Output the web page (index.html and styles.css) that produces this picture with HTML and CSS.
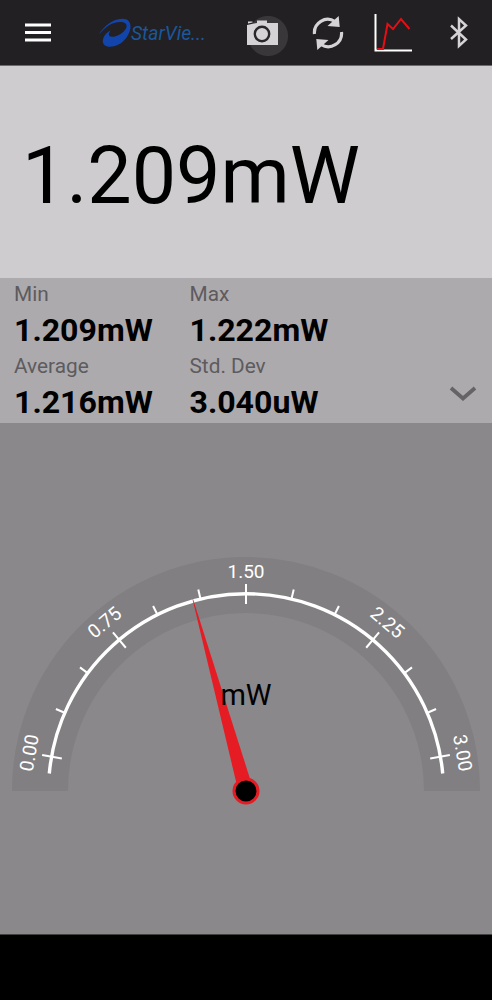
FILE: index.html
```html
<!DOCTYPE html>
<html lang="en">
  <head>
    <meta charset="UTF-8" />
    <meta name="viewport" content="width=device-width, initial-scale=1.0" />
    <title>StarViewer</title>
    <link rel="stylesheet" href="styles.css">
  </head>
  <body>
    <div class="app">
      <header class="toolbar">
        <svg class="menu" width="26" height="20" viewBox="0 0 26 20">
          <path d="M0 2H26M0 9.500H26M0 17H26" />
        </svg>
        <div class="brand">
          <svg class="logo" width="34" height="30" viewBox="0 0 34 30">
            <path fill-rule="evenodd" d="M.8 16.500C6 8 15 1 24 .8C30 .7 33 4 32.500 10C31 19 23 28.700 12 28.800C7 28.700 4.500 26 4.800 22.500C5.300 18.500 8 15 12.500 12.300C10.300 16 10 18.500 14 18.800C19 19 25.500 15 28 10.500C29.500 7 28 4.300 23.500 4C14 3.500 7.500 9 .8 16.500Z" />
          </svg>
          <span class="brandName">StarVie...</span>
        </div>
        <div class="camera">
          <svg width="32" height="26" viewBox="0 0 32 26">
            <path d="M0 5L7 3.500L10 3V.5H20V3H31V25H0ZM1 1.500H5.500V2.500L1 3.500Z" />
            <circle cx="15" cy="14" r="7.200" />
          </svg>
        </div>
        <svg class="refresh" width="32" height="34" viewBox="0 0 32 34">
          <path class="arc" d="M2.500 18A13.300 13.300 0 0 1 23 5.500M29.500 16A13.300 13.300 0 0 1 9 28.500" />
          <path class="head" d="M26.700 0L27.700 11L15.500 10ZM5.300 34L4.300 23L16.500 24Z" />
        </svg>
        <svg class="chart" width="38" height="38" viewBox="0 0 38 38">
          <path class="axis" d="M1.500 0V36.500H38" />
          <path class="trend" d="M3 35H9L13.500 10L19 15L27 5L35.500 15" />
        </svg>
        <svg class="bluetooth" width="18" height="34" viewBox="0 0 18 34">
          <path d="M1 9.500L16 23.500L9 30V3L16 9.500L1 23" />
        </svg>
      </header>

      <div class="reading">1.209mW</div>

      <div class="stats">
        <div class="stat">
          <div class="statName">Min</div>
          <div class="statValue">1.209mW</div>
        </div>
        <div class="stat">
          <div class="statName">Max</div>
          <div class="statValue">1.222mW</div>
        </div>
        <div class="stat">
          <div class="statName">Average</div>
          <div class="statValue">1.216mW</div>
        </div>
        <div class="stat">
          <div class="statName">Std. Dev</div>
          <div class="statValue">3.040uW</div>
        </div>
        <svg class="expand" width="28" height="16" viewBox="0 0 28 16">
          <path d="M2 2L14 12.500L26 2" />
        </svg>
      </div>

      <div class="gaugeNode">
        <!-- origin is the needle pivot -->
        <svg class="gauge" width="492" height="511" viewBox="-246 -368 492 511">
          <path class="band" d="M-206 0A206 206 0 0 1 206 0" />
          <path class="scale" d="M-196.700 -17.500A197.500 197.500 0 0 1 196.700 -17.500" />
          <g class="minor">
            <path d="M0 -197V-207" transform="rotate(-66.670)" />
            <path d="M0 -197V-207" transform="rotate(-53.330)" />
            <path d="M0 -197V-207" transform="rotate(-26.670)" />
            <path d="M0 -197V-207" transform="rotate(-13.330)" />
            <path d="M0 -197V-207" transform="rotate(13.330)" />
            <path d="M0 -197V-207" transform="rotate(26.670)" />
            <path d="M0 -197V-207" transform="rotate(53.330)" />
            <path d="M0 -197V-207" transform="rotate(66.670)" />
          </g>
          <g class="major">
            <g transform="rotate(-80)"><path d="M0 -187V-207" /><text y="-213.500">0.00</text></g>
            <g transform="rotate(-40)"><path d="M0 -187V-207" /><text y="-213.500">0.75</text></g>
            <g><path d="M0 -187V-207" /><text y="-213.500">1.50</text></g>
            <g transform="rotate(40)"><path d="M0 -187V-207" /><text y="-213.500">2.25</text></g>
            <g transform="rotate(80)"><path d="M0 -187V-207" /><text y="-213.500">3.00</text></g>
          </g>
          <path class="needle" d="M-.3 -199H.3L7.500 0H-7.500Z" transform="rotate(-15.500)" />
          <circle class="hub" r="12" />
          <text class="unit" y="-86">mW</text>
        </svg>
      </div>

      <div class="navBar"></div>
    </div>
  </body>
</html>
```
FILE: styles.css
```css
body {
  margin: 0;
  font-family: Roboto, "Liberation Sans", sans-serif;
}

.app {
  width: 492px;
  height: 1000px;
  display: flex;
  flex-direction: column;
  overflow: hidden;
  background: #8a888a;
}

.toolbar {
  display: flex;
  align-items: center;
  box-sizing: border-box;
  height: 66px;
  padding: 0 24px 0 25px;
  background: #222023;
  border-bottom: 1px solid #6b696b;
}
.menu {
  stroke: #fff;
  stroke-width: 2.9;
}
.brand {
  display: flex;
  align-items: center;
  width: 107px;
  margin-left: 47px;
}
.logo {
  flex: none;
  fill: #1145ab;
}
.brandName {
  margin-left: -1px;
  padding-top: 2px;
  font-size: 19.3px;
  font-style: italic;
  line-height: 30px;
  color: #1b5799;
}
.camera {
  display: flex;
  align-items: center;
  width: 41px;
  height: 40px;
  margin: 7px 0 0 42px;
  background: radial-gradient(circle at 21px 20px, #39373a 19.5px, transparent 20.5px);
}
.camera svg {
  margin: -6px 0 0 0;
  fill: #d5d3d6;
}
.camera circle {
  stroke: #29272a;
  stroke-width: 2.4;
}
.refresh {
  margin-left: 24px;
}
.refresh .arc {
  fill: none;
  stroke: #d5d3d6;
  stroke-width: 3.2;
}
.refresh .head {
  fill: #d5d3d6;
}
.chart {
  margin-left: 30px;
  fill: none;
}
.chart .axis {
  stroke: #fff;
  stroke-width: 2;
}
.chart .trend {
  stroke: #e60d14;
  stroke-width: 2;
}
.bluetooth {
  margin-left: auto;
  fill: none;
  stroke: #d5d3d6;
  stroke-width: 2.5;
}

.reading {
  height: 212px;
  padding-left: 22px;
  box-sizing: border-box;
  background: #cecccf;
  color: #000;
  font-size: 79px;
  line-height: 220px;
}

.stats {
  position: relative;
  display: grid;
  grid-template-columns: 175.5px 176px;
  grid-auto-rows: 72px;
  box-sizing: border-box;
  height: 145px;
  padding-left: 14px;
  background: #acaaad;
}
.statName {
  font-size: 20.8px;
  line-height: 32px;
  color: #5d5b5e;
}
.statValue {
  font-size: 32.1px;
  font-weight: bold;
  line-height: 40px;
  color: #000;
}
.expand {
  position: absolute;
  right: 15px;
  bottom: 21px;
  fill: none;
  stroke: #656366;
  stroke-width: 3.8;
}

.gaugeNode {
  height: 511px;
  border-bottom: 1px solid #424042;
}
.gauge {
  display: block;
}
.gauge text {
  text-anchor: middle;
}
.band {
  fill: none;
  stroke: #817f82;
  stroke-width: 56;
}
.scale {
  fill: none;
  stroke: #fff;
  stroke-width: 3.4;
}
.minor,
.major path {
  stroke: #fff;
  stroke-width: 2;
}
.major text {
  fill: #fff;
  font-size: 19px;
}
.needle {
  fill: #e51c24;
}
.hub {
  fill: #000;
  stroke: #e51c24;
  stroke-width: 3;
}
.unit {
  fill: #000;
  font-size: 29px;
}

.navBar {
  flex: 1;
  background: #000;
}
```
